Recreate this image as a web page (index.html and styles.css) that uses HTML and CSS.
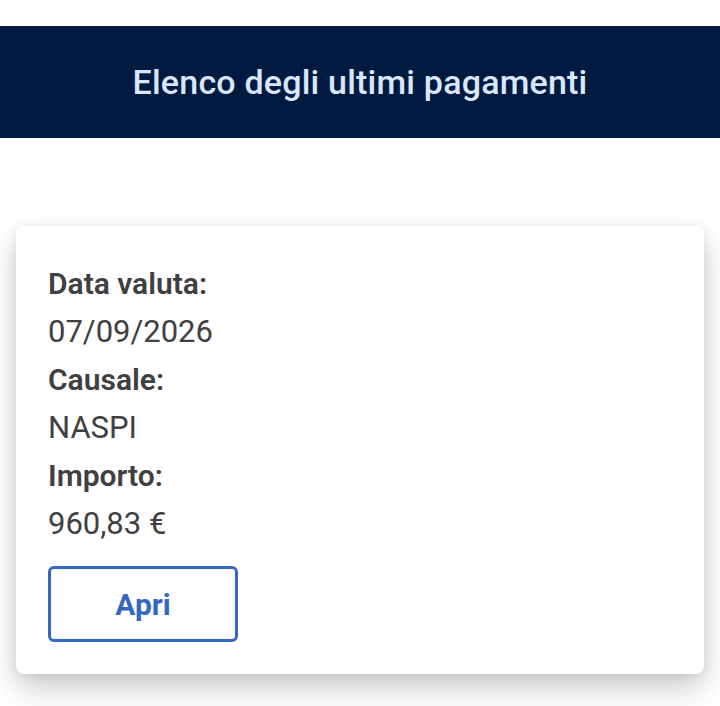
FILE: index.html
```html
<!DOCTYPE html>
<html lang="it">

<head>
    <meta charset="UTF-8" />
    <meta name="viewport" content="width=device-width, initial-scale=1.0" />
    <title>Elenco degli ultimi pagamenti</title>
    <link rel="stylesheet" href="styles.css">
</head>

<body>
    <header class="page-header">
        <h1 class="page-title">Elenco degli ultimi pagamenti</h1>
    </header>

    <main class="payments">
        <div class="payment-card">
            <dl class="payment-info">
                <dt>Data valuta:</dt>
                <dd>07/09/2026</dd>
                <dt>Causale:</dt>
                <dd>NASPI</dd>
                <dt>Importo:</dt>
                <dd>960,83 €</dd>
            </dl>
            <button class="open-button">Apri</button>
        </div>
    </main>
</body>

</html>
```
FILE: styles.css
```css
:root {
    --navy: #021a3f;
    --title-color: #d9e7fc;
    --text-color: #404040;
    --blue: #3467c1;
}

body {
    margin: 0;
    padding: 26px 0 0;
    font-family: Roboto, 'Open Sans', sans-serif;
    background: #ffffff;
    color: var(--text-color);
}

.page-header {
    background: var(--navy);
    height: 112px;
    display: flex;
    align-items: center;
    justify-content: center;
}

.page-title {
    margin: 0;
    font-size: 34px;
    font-weight: 500;
    letter-spacing: 0.2px;
    color: var(--title-color);
}

.payments {
    padding: 88px 16px 40px;
}

.payment-card {
    background: #ffffff;
    border-radius: 8px;
    box-shadow: 0 14px 30px rgba(0, 0, 0, 0.2), 0 2px 12px rgba(0, 0, 0, 0.08);
    padding: 34px 32px 32px;
    height: 448px;
    box-sizing: border-box;
}

.payment-info {
    margin: 0;
    font-size: 30px;
    line-height: 48px;
}

.payment-info dt {
    font-weight: 600;
}

.payment-info dd {
    margin: 0;
    font-size: 31px;
    font-weight: 400;
}

.open-button {
    margin-top: 18px;
    width: 190px;
    height: 76px;
    background: #ffffff;
    border: 3px solid var(--blue);
    border-radius: 6px;
    color: var(--blue);
    font-family: inherit;
    font-size: 30px;
    font-weight: 700;
    cursor: pointer;
}
```
